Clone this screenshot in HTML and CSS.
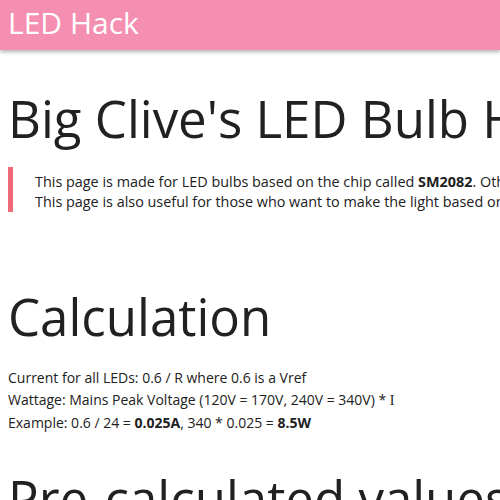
FILE: index.html
```html
<!DOCTYPE html>
<html>
<head>
<meta charset="utf-8">
<link rel="stylesheet" href="styles.css">
</head>
<body>
<header class="topbar"><span class="brand">LED Hack</span></header>
<main class="content">
<h1 class="title">Big Clive's LED Bulb Hack</h1>
<blockquote class="note">
<p>This page is made for LED bulbs based on the chip called <b>SM2082</b>. Other chips may work too.</p>
<p>This page is also useful for those who want to make the light based on this chip.</p>
</blockquote>
<h2 class="title section">Calculation</h2>
<p class="line">Current for all LEDs: 0.6 / R where 0.6 is a Vref</p>
<p class="line">Wattage: Mains Peak Voltage (120V = 170V, 240V = 340V) * <span class="serif">I</span></p>
<p class="line">Example: 0.6 / 24 = <b>0.025A</b>, 340 * 0.025 = <b>8.5W</b></p>
<h2 class="title section last">Pre-calculated values</h2>
</main>
</body>
</html>
```
FILE: styles.css
```css
html, body { margin: 0; padding: 0; background: #fff; overflow: hidden; }
body { font-family: "Open Sans", sans-serif; color: #212121; width: 500px; }
.topbar { background: #f48fb1; height: 50px; box-shadow: 0 2px 4px rgba(0,0,0,0.3); display: flex; align-items: center; padding: 0 8px; position: relative; }
.brand { color: #fff; font-size: 30px; white-space: nowrap; line-height: 1; margin-top: -4px; }
.content { padding: 0 8px; }
.title { font-size: 51px; font-weight: 400; margin: 36px 0 17px; white-space: nowrap; line-height: 64px; }
.section { margin-top: 72px; margin-bottom: 19px; }
.section.last { margin-top: 32px; }
.note { margin: 0; border-left: 5px solid #f06b77; padding: 5px 0 0 22px; white-space: nowrap; }
.note p { margin: 0; font-size: 14.4px; line-height: 20px; }
.line { margin: 0; font-size: 14px; line-height: 22px; white-space: nowrap; }
.serif { font-family: "Liberation Serif", serif; }
```
